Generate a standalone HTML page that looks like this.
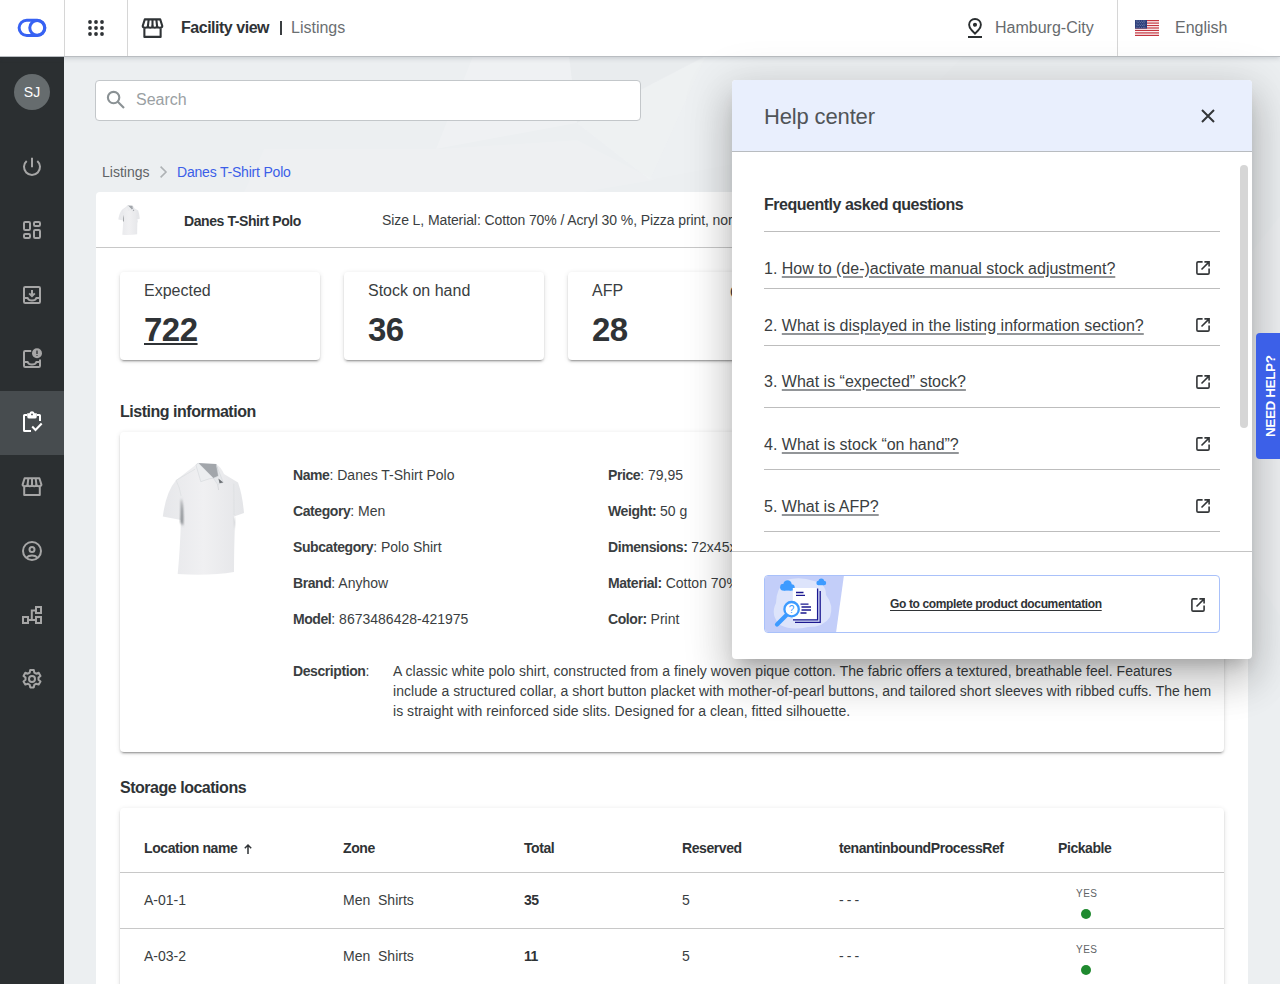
<!DOCTYPE html>
<html><head><meta charset="utf-8">
<style>
*{box-sizing:border-box;margin:0;padding:0}
html,body{width:1280px;height:984px;overflow:hidden}
body{font-family:"Liberation Sans",sans-serif;color:#333638;background:#eceff1;position:relative}
#hdr{position:absolute;left:0;top:0;width:1280px;height:56px;background:#fff;box-shadow:0 1px 0 #b9bdc1,0 2px 5px rgba(60,70,80,.22);z-index:5}
#side{position:absolute;left:0;top:56px;width:64px;height:928px;background:#2b2f31;z-index:4}
#bg{position:absolute;left:64px;top:56px;width:1216px;height:928px;background:#eceff1;overflow:hidden}
.vdiv{position:absolute;top:0;width:1px;height:56px;background:#d6d6d6}
.t{position:absolute;white-space:nowrap;line-height:1}
.b{font-weight:700;letter-spacing:-0.03em}
svg{position:absolute;overflow:visible}
.card{position:absolute;background:#fff;border-radius:4px;box-shadow:0 3px 1px -2px rgba(0,0,0,.2),0 2px 2px 0 rgba(0,0,0,.14),0 1px 5px 0 rgba(0,0,0,.12)}
</style></head><body>
<svg width="0" height="0" style="position:absolute">
  <defs>
    <linearGradient id="shg" x1="0" y1="0" x2="1" y2="0"><stop offset="0" stop-color="#e6e7ea"/><stop offset=".5" stop-color="#f0f0f2"/><stop offset="1" stop-color="#e4e5e8"/></linearGradient>
    <filter id="bl1" x="-50%" y="-50%" width="200%" height="200%"><feGaussianBlur stdDeviation="1.2"/></filter>
    <symbol id="shirt" viewBox="0 0 110 140">
      <path d="M47.5 13.5 L66.5 14.5 Q71 17 74 24 L88 32.5 Q92.5 45 94 63 L84 66.5 L85 72 Q84 100 84 122 Q60 126 27.7 124 Q30 100 31 70 L12.8 66.5 Q16 42 26 30.3 Z" fill="url(#shg)"/>
      <path d="M48.3 13.1 L66.3 14.1 Q68.5 20 68.4 26.1 L63.4 28.2 Z" fill="#a2a6ab"/>
      <path d="M45.9 14.8 L48.3 13.1 L63.4 28.2 L59.2 28.8 L50.8 31.7 Z" fill="#eceef0" stroke="#cfd2d6" stroke-width=".5"/>
      <path d="M66.3 14.8 L73.3 32.4 L67.7 34.5 L63.4 28.2 L68.4 26.1 Z" fill="#e6e8eb" stroke="#cfd2d6" stroke-width=".5"/>
      <path d="M68.4 28.6 L73.3 32.4 L69.5 33.2 Z" fill="#6e7276"/>
      <path d="M67.7 34.5 L68.6 40" stroke="#c9ccd0" stroke-width=".6"/>
      <path d="M26.2 30.3 L45.2 19.1 M26.2 30.3 Q30 38 31.1 46 M83.8 33.8 Q84 50 84 65" stroke="#d9dbde" stroke-width=".6" fill="none"/>
      <path d="M31 48 Q34 58 33 76 L30.5 72 Q31 60 31 48 Z" fill="#7e8286" filter="url(#bl1)"/>
      <path d="M84 66 Q86 70 85 80 L84.5 72 Z" fill="#b9bcc0" filter="url(#bl1)"/>
    </symbol>
  </defs>
</svg>
<div id="bg">
  <svg style="left:0;top:0" width="1216" height="928" viewBox="0 0 1216 928">
    <g fill="#fff">
      <path d="M409 0 L505 0 L513 67 L372 93 Z" opacity=".16"/>
      <path d="M513 67 L642 0 L586 124 Z" opacity=".12"/>
      <path d="M200 93 L372 93 L513 84 L591 124 L520 136 L180 136 Z" opacity=".10"/>
      <path d="M642 0 L900 0 L820 80 L586 124 Z" opacity=".08"/>
      <path d="M1184 200 L1216 160 L1216 560 L1190 520 Z" opacity=".10"/>
    </g>
    <g fill="#000">
      <path d="M505 0 L642 0 L513 67 Z" opacity=".012"/>
    </g>
  </svg>
</div>

<!-- MAIN -->
<div id="main" style="position:absolute;left:0;top:0;width:1280px;height:984px">
  <!-- search -->
  <div style="position:absolute;left:95px;top:79.5px;width:546px;height:41.5px;background:#fff;border:1px solid #c3c7ca;border-radius:4px"></div>
  <svg style="left:104px;top:88px" width="24" height="24" viewBox="0 0 24 24" fill="none" stroke="#8a9194" stroke-width="2.1"><circle cx="9.6" cy="9.6" r="5.7"/><path d="M13.8 13.8l6.2 6.2"/></svg>
  <div class="t" style="left:136px;top:92px;font-size:16px;color:#9aa0a3">Search</div>
  <!-- breadcrumb -->
  <div class="t" style="left:102px;top:165px;font-size:14px;color:#5f6366">Listings</div>
  <svg style="left:155px;top:164px" width="16" height="16" viewBox="0 0 16 16" fill="none" stroke="#aeb2b5" stroke-width="1.6"><path d="M5.6 2.6 11 8l-5.4 5.4"/></svg>
  <div class="t" style="left:177px;top:165px;font-size:14px;color:#3b5ee8;letter-spacing:-0.2px">Danes T-Shirt Polo</div>

  <!-- white panel -->
  <div style="position:absolute;left:96px;top:192px;width:1152px;height:800px;background:#fff;border-radius:4px 4px 0 0"></div>
  <div style="position:absolute;left:96px;top:247px;width:1152px;height:1px;background:#c8c8c8"></div>
  <!-- thumb -->
  <svg style="left:115px;top:202px" width="29" height="37" viewBox="0 0 110 140"><use href="#shirt"/></svg>
  <div class="t b" style="left:184px;top:214px;font-size:14px;color:#2f3336">Danes T-Shirt Polo</div>
  <div class="t" style="left:382px;top:213px;font-size:14px;color:#3a3e41;letter-spacing:-0.1px">Size L, Material: Cotton 70% / Acryl 30 %, Pizza print, normal fit</div>

  <!-- metric cards -->
  <div class="card" style="left:120px;top:272px;width:200px;height:88px;box-shadow:0 3px 1px -2px rgba(0,0,0,.2),0 2px 2px 0 rgba(0,0,0,.14),0 1px 5px 0 rgba(0,0,0,.12)"></div>
  <div class="card" style="left:344px;top:272px;width:200px;height:88px;box-shadow:0 3px 1px -2px rgba(0,0,0,.2),0 2px 2px 0 rgba(0,0,0,.14),0 1px 5px 0 rgba(0,0,0,.12)"></div>
  <div class="card" style="left:568px;top:272px;width:200px;height:88px;box-shadow:0 3px 1px -2px rgba(0,0,0,.2),0 2px 2px 0 rgba(0,0,0,.14),0 1px 5px 0 rgba(0,0,0,.12)"></div>
  <div class="t" style="left:144px;top:283px;font-size:16px;color:#3a3e41">Expected</div>
  <div class="t b" style="left:144px;top:313px;font-size:33px;color:#2f3336;letter-spacing:-0.5px;text-decoration:underline;text-underline-offset:2px;text-decoration-thickness:2px">722</div>
  <div class="t" style="left:368px;top:283px;font-size:16px;color:#3a3e41">Stock on hand</div>
  <div class="t b" style="left:368px;top:313px;font-size:33px;color:#2f3336;letter-spacing:-0.5px">36</div>
  <div class="t" style="left:592px;top:283px;font-size:16px;color:#3a3e41">AFP</div>
  <div class="t b" style="left:592px;top:313px;font-size:33px;color:#2f3336;letter-spacing:-0.5px">28</div>
  <div class="t" style="left:730px;top:285px;font-size:16px;color:#3a3e41">On hold</div>

  <!-- listing information -->
  <div class="t b" style="left:120px;top:404px;font-size:16px;color:#2f3336">Listing information</div>
  <div class="card" style="left:120px;top:432px;width:1104px;height:320px"></div>
  <svg style="left:150px;top:450px" width="110" height="140" viewBox="0 0 110 140"><use href="#shirt"/></svg>
  <div class="t" style="left:293px;top:468px;font-size:14px;color:#3a3e41"><b class="b">Name</b>: Danes T-Shirt Polo</div>
  <div class="t" style="left:293px;top:504px;font-size:14px;color:#3a3e41"><b class="b">Category</b>: Men</div>
  <div class="t" style="left:293px;top:540px;font-size:14px;color:#3a3e41"><b class="b">Subcategory</b>: Polo Shirt</div>
  <div class="t" style="left:293px;top:576px;font-size:14px;color:#3a3e41"><b class="b">Brand</b>: Anyhow</div>
  <div class="t" style="left:293px;top:612px;font-size:14px;color:#3a3e41"><b class="b">Model</b>: 8673486428-421975</div>
  <div class="t" style="left:608px;top:468px;font-size:14px;color:#3a3e41"><b class="b">Price</b>: 79,95</div>
  <div class="t" style="left:608px;top:504px;font-size:14px;color:#3a3e41"><b class="b">Weight:</b> 50 g</div>
  <div class="t" style="left:608px;top:540px;font-size:14px;color:#3a3e41"><b class="b">Dimensions:</b> 72x45x3 cm</div>
  <div class="t" style="left:608px;top:576px;font-size:14px;color:#3a3e41"><b class="b">Material:</b> Cotton 70% / Acryl 30 %</div>
  <div class="t" style="left:608px;top:612px;font-size:14px;color:#3a3e41"><b class="b">Color:</b> Print</div>
  <div class="t" style="left:293px;top:664px;font-size:14px;color:#3a3e41"><b class="b">Description</b>:</div>
  <div class="t" style="left:393px;top:665px;font-size:14px;color:#3a3e41;line-height:20px;top:661px;letter-spacing:0.035px">A classic white polo shirt, constructed from a finely woven pique cotton. The fabric offers a textured, breathable feel. Features<br>include a structured collar, a short button placket with mother-of-pearl buttons, and tailored short sleeves with ribbed cuffs. The hem<br>is straight with reinforced side slits. Designed for a clean, fitted silhouette.</div>

  <!-- storage locations -->
  <div class="t b" style="left:120px;top:780px;font-size:16px;color:#2f3336">Storage locations</div>
  <div class="card" style="left:120px;top:808px;width:1104px;height:200px"></div>
  <div style="position:absolute;left:120px;top:872px;width:1104px;height:1px;background:#c8c8c8"></div>
  <div style="position:absolute;left:120px;top:928px;width:1104px;height:1px;background:#c8c8c8"></div>
  <div class="t b" style="left:144px;top:841px;font-size:14px;color:#2f3336">Location name</div>
  <svg style="left:243px;top:843px" width="10" height="12" viewBox="0 0 10 12" fill="none" stroke="#2f3336" stroke-width="1.5"><path d="M5 11V2M1.8 5.2 5 2l3.2 3.2"/></svg>
  <div class="t b" style="left:343px;top:841px;font-size:14px;color:#2f3336">Zone</div>
  <div class="t b" style="left:524px;top:841px;font-size:14px;color:#2f3336">Total</div>
  <div class="t b" style="left:682px;top:841px;font-size:14px;color:#2f3336">Reserved</div>
  <div class="t b" style="left:839px;top:841px;font-size:14px;color:#2f3336">tenantinboundProcessRef</div>
  <div class="t b" style="left:1058px;top:841px;font-size:14px;color:#2f3336">Pickable</div>

  <div class="t" style="left:144px;top:893px;font-size:14px;color:#3a3e41">A-01-1</div>
  <div class="t" style="left:343px;top:893px;font-size:14px;color:#3a3e41;white-space:pre">Men  Shirts</div>
  <div class="t b" style="left:524px;top:893px;font-size:14px;color:#2f3336">35</div>
  <div class="t" style="left:682px;top:893px;font-size:14px;color:#3a3e41">5</div>
  <div class="t" style="left:839px;top:893px;font-size:14px;color:#3a3e41;letter-spacing:-0.4px">- - -</div>
  <div class="t" style="left:1076px;top:889px;font-size:10px;color:#5f6366;letter-spacing:.5px">YES</div>
  <div style="position:absolute;left:1081px;top:909px;width:10px;height:10px;border-radius:50%;background:#1f8a2f"></div>

  <div class="t" style="left:144px;top:949px;font-size:14px;color:#3a3e41">A-03-2</div>
  <div class="t" style="left:343px;top:949px;font-size:14px;color:#3a3e41;white-space:pre">Men  Shirts</div>
  <div class="t b" style="left:524px;top:949px;font-size:14px;color:#2f3336">11</div>
  <div class="t" style="left:682px;top:949px;font-size:14px;color:#3a3e41">5</div>
  <div class="t" style="left:839px;top:949px;font-size:14px;color:#3a3e41;letter-spacing:-0.4px">- - -</div>
  <div class="t" style="left:1076px;top:945px;font-size:10px;color:#5f6366;letter-spacing:.5px">YES</div>
  <div style="position:absolute;left:1081px;top:965px;width:10px;height:10px;border-radius:50%;background:#1f8a2f"></div>
</div>

<!-- HELP PANEL -->
<div id="help" style="position:absolute;left:732px;top:80px;width:520px;height:579px;background:#fff;border-radius:4px;box-shadow:0 11px 15px -7px rgba(0,0,0,.2),0 24px 38px 3px rgba(0,0,0,.14),0 9px 46px 8px rgba(0,0,0,.12);z-index:10;overflow:hidden">
</div>
<div id="helpc" style="position:absolute;left:0;top:0;width:1280px;height:984px;z-index:11">
  <div style="position:absolute;left:732px;top:80px;width:520px;height:71px;background:#e9effd;border-radius:4px 4px 0 0"></div>
  <div style="position:absolute;left:732px;top:151px;width:520px;height:1px;background:#b8bcc0"></div>
  <div class="t" style="left:764px;top:106px;font-size:22px;color:#505457;letter-spacing:-0.15px">Help center</div>
  <svg style="left:1201px;top:109px" width="14" height="14" viewBox="0 0 14 14" stroke="#333638" stroke-width="2"><path d="M1 1l12 12M13 1 1 13"/></svg>
  <div style="position:absolute;left:1240px;top:165px;width:8px;height:263px;border-radius:4px;background:#d6d6d6"></div>
  <div class="t b" style="left:764px;top:197px;font-size:16px;color:#2f3336">Frequently asked questions</div>
  <div style="position:absolute;left:764px;top:231px;width:456px;height:1px;background:#bdbdbd"></div>
  <div class="t" style="left:764px;top:260.5px;font-size:16px;color:#3a3e41">1. <span style="text-decoration:underline;text-decoration-color:#929598;text-underline-offset:2px;text-decoration-thickness:1.5px">How to (de-)activate manual stock adjustment?</span></div>
  <svg style="left:1193px;top:258px" width="20" height="20" viewBox="0 0 20 20" fill="none" stroke="#333638" stroke-width="1.6"><path d="M9.6 3.9H5.1Q3.9 3.9 3.9 5.1V14.9Q3.9 16.1 5.1 16.1H14.9Q16.1 16.1 16.1 14.9V10.6"/><path d="M11.4 3.9h4.7v4.6M15.9 4.1 8.5 11.5"/></svg>
  <div style="position:absolute;left:764px;top:288px;width:456px;height:1px;background:#bdbdbd"></div>
  <div class="t" style="left:764px;top:317.5px;font-size:16px;color:#3a3e41">2. <span style="text-decoration:underline;text-decoration-color:#929598;text-underline-offset:2px;text-decoration-thickness:1.5px">What is displayed in the listing information section?</span></div>
  <svg style="left:1193px;top:315px" width="20" height="20" viewBox="0 0 20 20" fill="none" stroke="#333638" stroke-width="1.6"><path d="M9.6 3.9H5.1Q3.9 3.9 3.9 5.1V14.9Q3.9 16.1 5.1 16.1H14.9Q16.1 16.1 16.1 14.9V10.6"/><path d="M11.4 3.9h4.7v4.6M15.9 4.1 8.5 11.5"/></svg>
  <div style="position:absolute;left:764px;top:345px;width:456px;height:1px;background:#bdbdbd"></div>
  <div class="t" style="left:764px;top:373.5px;font-size:16px;color:#3a3e41">3. <span style="text-decoration:underline;text-decoration-color:#929598;text-underline-offset:2px;text-decoration-thickness:1.5px">What is “expected” stock?</span></div>
  <svg style="left:1193px;top:372px" width="20" height="20" viewBox="0 0 20 20" fill="none" stroke="#333638" stroke-width="1.6"><path d="M9.6 3.9H5.1Q3.9 3.9 3.9 5.1V14.9Q3.9 16.1 5.1 16.1H14.9Q16.1 16.1 16.1 14.9V10.6"/><path d="M11.4 3.9h4.7v4.6M15.9 4.1 8.5 11.5"/></svg>
  <div style="position:absolute;left:764px;top:407px;width:456px;height:1px;background:#bdbdbd"></div>
  <div class="t" style="left:764px;top:436.5px;font-size:16px;color:#3a3e41">4. <span style="text-decoration:underline;text-decoration-color:#929598;text-underline-offset:2px;text-decoration-thickness:1.5px">What is stock “on hand”?</span></div>
  <svg style="left:1193px;top:434px" width="20" height="20" viewBox="0 0 20 20" fill="none" stroke="#333638" stroke-width="1.6"><path d="M9.6 3.9H5.1Q3.9 3.9 3.9 5.1V14.9Q3.9 16.1 5.1 16.1H14.9Q16.1 16.1 16.1 14.9V10.6"/><path d="M11.4 3.9h4.7v4.6M15.9 4.1 8.5 11.5"/></svg>
  <div style="position:absolute;left:764px;top:469px;width:456px;height:1px;background:#bdbdbd"></div>
  <div class="t" style="left:764px;top:498.5px;font-size:16px;color:#3a3e41">5. <span style="text-decoration:underline;text-decoration-color:#929598;text-underline-offset:2px;text-decoration-thickness:1.5px">What is AFP?</span></div>
  <svg style="left:1193px;top:496px" width="20" height="20" viewBox="0 0 20 20" fill="none" stroke="#333638" stroke-width="1.6"><path d="M9.6 3.9H5.1Q3.9 3.9 3.9 5.1V14.9Q3.9 16.1 5.1 16.1H14.9Q16.1 16.1 16.1 14.9V10.6"/><path d="M11.4 3.9h4.7v4.6M15.9 4.1 8.5 11.5"/></svg>
  <div style="position:absolute;left:764px;top:531px;width:456px;height:1px;background:#bdbdbd"></div>

  <div style="position:absolute;left:732px;top:551px;width:520px;height:1px;background:#c4c4c4"></div>
  <div style="position:absolute;left:764px;top:575px;width:456px;height:58px;border:1px solid #a9c1fa;border-radius:4px;overflow:hidden">
    <svg style="left:-1px;top:-1px" width="82" height="58" viewBox="0 0 82 58">
      <path d="M0 0H80L72 58H0z" fill="#c3cef9"/>
      <path d="M22 5Q36 1 50 6Q62 8 62 20Q70 30 66 42Q60 52 44 52Q28 56 16 50Q6 40 12 28Q12 14 22 5Z" fill="#dde4fb"/>
      <g fill="#3d9bff"><circle cx="23.5" cy="9.5" r="4.2"/><circle cx="19.5" cy="12.2" r="3.4"/><circle cx="27.5" cy="12.4" r="3.2"/><rect x="19.5" y="11" width="8" height="4.6"/>
      <circle cx="57.3" cy="6.2" r="2.8"/><circle cx="54.6" cy="8" r="2.2"/><circle cx="60" cy="8" r="2.2"/><rect x="54.6" y="7" width="5.4" height="3.2"/></g>
      <g stroke="#1b1890" stroke-width="1.3" fill="none"><path d="M56.2 16V47.3H31"/><path d="M53.6 13.5V44.8H29"/></g>
      <rect x="28.8" y="13" width="23.8" height="31" fill="#fff"/>
      <g stroke="#1b1890" stroke-width="1.3"><path d="M32 17.5h7.5M32 20.3h9M36.5 29.2h8M37.5 32h9.5M37.5 35h9.5M36.5 38h6"/></g>
      <path d="M22.5 40 13 49.6" stroke="#3d9bff" stroke-width="4.2" stroke-linecap="round"/>
      <circle cx="27.6" cy="34.2" r="7.2" fill="#fff" stroke="#3d9bff" stroke-width="2.3"/>
      <text x="27.6" y="37.8" font-family="Liberation Sans" font-size="10" fill="#3d9bff" text-anchor="middle">?</text>
    </svg>
  </div>
  <div class="t b" style="left:890px;top:598px;font-size:12px;color:#2f3336;text-decoration:underline;text-underline-offset:2px">Go to complete product documentation</div>
  <svg style="left:1188px;top:595px" width="20" height="20" viewBox="0 0 20 20" fill="none" stroke="#333638" stroke-width="1.6"><path d="M9.6 3.9H5.1Q3.9 3.9 3.9 5.1V14.9Q3.9 16.1 5.1 16.1H14.9Q16.1 16.1 16.1 14.9V10.6"/><path d="M11.4 3.9h4.7v4.6M15.9 4.1 8.5 11.5"/></svg>
  <!-- need help tab -->
  <div style="position:absolute;left:1256px;top:333px;width:30px;height:126px;border-radius:4px;background:#3c60e8"></div>
  <div class="t b" style="left:1263.5px;top:437px;font-size:13.5px;color:#fff;transform:rotate(-90deg);transform-origin:0 0;letter-spacing:-0.4px">NEED HELP?</div>
</div>

<!-- HEADER -->
<div id="hdr">
  <div class="vdiv" style="left:64px"></div>
  <div class="vdiv" style="left:127px"></div>
  <div class="vdiv" style="left:1117px"></div>
  <!-- logo -->
  <svg style="left:16px;top:17px" width="32" height="22" viewBox="0 0 32 22"><rect x="3.1" y="3.2" width="25.8" height="15.3" rx="7.65" fill="none" stroke="#3762f3" stroke-width="3"/><circle cx="21.2" cy="10.85" r="7.45" fill="none" stroke="#3762f3" stroke-width="3"/></svg>
  <!-- grid -->
  <svg style="left:88px;top:20px" width="16" height="16" viewBox="0 0 16 16" fill="#2f3336"><circle cx="2" cy="2" r="1.9"/><circle cx="8" cy="2" r="1.9"/><circle cx="14" cy="2" r="1.9"/><circle cx="2" cy="8" r="1.9"/><circle cx="8" cy="8" r="1.9"/><circle cx="14" cy="8" r="1.9"/><circle cx="2" cy="14" r="1.9"/><circle cx="8" cy="14" r="1.9"/><circle cx="14" cy="14" r="1.9"/></svg>
  <!-- store -->
  <svg style="left:140.3px;top:14.6px" width="25" height="25" viewBox="0 0 24 24" fill="none" stroke="#2f3336" stroke-width="2" stroke-linejoin="round"><path d="M4.6 4.2H19.4L21.4 10.6Q21.4 12.2 19 12.2Q16.4 12.2 16.4 10.6Q16.4 12.2 14.2 12.2Q12 12.2 12 10.6Q12 12.2 9.8 12.2Q7.6 12.2 7.6 10.6Q7.6 12.2 5 12.2Q2.6 12.2 2.6 10.6Z"/><path d="M8.3 4.4 7.6 10.6M12 4.4V10.6M15.7 4.4l.7 6.2"/><path d="M4.2 12.6V21H19.8V12.6"/></svg>
  <div class="t b" style="left:181px;top:20px;font-size:16px;color:#2f3336">Facility view</div>
  <div style="position:absolute;left:279.5px;top:21px;width:2px;height:13.5px;background:#3a3e41"></div>
  <div class="t" style="left:291px;top:20px;font-size:16px;color:#6b6f72">Listings</div>
  <!-- location -->
  <svg style="left:968px;top:18px" width="14" height="20" viewBox="0 0 14 20" fill="none" stroke="#2a2e30" stroke-width="1.9"><path d="M7 1C3.7 1 1.1 3.5 1.1 6.8c0 2.3 1.3 3.9 2.4 5.2L7 15.6l3.5-3.6c1.1-1.3 2.4-2.9 2.4-5.2C12.9 3.5 10.3 1 7 1z"/><circle cx="7" cy="6.8" r="1.1" fill="#2a2e30"/><path d="M0 19h14" stroke-width="2"/></svg>
  <div class="t" style="left:995px;top:20px;font-size:16px;color:#676b6e">Hamburg-City</div>
  <!-- flag -->
  <svg style="left:1135px;top:20px" width="24" height="16" viewBox="0 0 24 16"><rect width="24" height="16" fill="#fff"/><g fill="#c4343f"><rect y="0" width="24" height="1.23"/><rect y="2.46" width="24" height="1.23"/><rect y="4.92" width="24" height="1.23"/><rect y="7.38" width="24" height="1.23"/><rect y="9.84" width="24" height="1.23"/><rect y="12.3" width="24" height="1.23"/><rect y="14.77" width="24" height="1.23"/></g><rect width="12" height="8.6" fill="#2c3e7a"/><circle cx="1.2" cy="1.0" r=".38" fill="#c9d0e6"/><circle cx="2.95" cy="1.0" r=".38" fill="#c9d0e6"/><circle cx="4.7" cy="1.0" r=".38" fill="#c9d0e6"/><circle cx="6.45" cy="1.0" r=".38" fill="#c9d0e6"/><circle cx="8.2" cy="1.0" r=".38" fill="#c9d0e6"/><circle cx="9.95" cy="1.0" r=".38" fill="#c9d0e6"/><circle cx="2.07" cy="2.55" r=".38" fill="#c9d0e6"/><circle cx="3.8200000000000003" cy="2.55" r=".38" fill="#c9d0e6"/><circle cx="5.57" cy="2.55" r=".38" fill="#c9d0e6"/><circle cx="7.32" cy="2.55" r=".38" fill="#c9d0e6"/><circle cx="9.069999999999999" cy="2.55" r=".38" fill="#c9d0e6"/><circle cx="1.2" cy="4.1" r=".38" fill="#c9d0e6"/><circle cx="2.95" cy="4.1" r=".38" fill="#c9d0e6"/><circle cx="4.7" cy="4.1" r=".38" fill="#c9d0e6"/><circle cx="6.45" cy="4.1" r=".38" fill="#c9d0e6"/><circle cx="8.2" cy="4.1" r=".38" fill="#c9d0e6"/><circle cx="9.95" cy="4.1" r=".38" fill="#c9d0e6"/><circle cx="2.07" cy="5.65" r=".38" fill="#c9d0e6"/><circle cx="3.8200000000000003" cy="5.65" r=".38" fill="#c9d0e6"/><circle cx="5.57" cy="5.65" r=".38" fill="#c9d0e6"/><circle cx="7.32" cy="5.65" r=".38" fill="#c9d0e6"/><circle cx="9.069999999999999" cy="5.65" r=".38" fill="#c9d0e6"/><circle cx="1.2" cy="7.2" r=".38" fill="#c9d0e6"/><circle cx="2.95" cy="7.2" r=".38" fill="#c9d0e6"/><circle cx="4.7" cy="7.2" r=".38" fill="#c9d0e6"/><circle cx="6.45" cy="7.2" r=".38" fill="#c9d0e6"/><circle cx="8.2" cy="7.2" r=".38" fill="#c9d0e6"/><circle cx="9.95" cy="7.2" r=".38" fill="#c9d0e6"/></svg>
  <div class="t" style="left:1175px;top:20px;font-size:16px;color:#676b6e">English</div>
</div>

<!-- SIDEBAR -->
<div id="side">
  <div style="position:absolute;left:14px;top:18px;width:36px;height:36px;border-radius:50%;background:#666c6e"></div>
  <div class="t" style="left:14px;top:29px;width:36px;text-align:center;font-size:14px;color:#fff;letter-spacing:0">SJ</div>
  <div style="position:absolute;left:0;top:335px;width:64px;height:64px;background:#474c4f"></div>
  <!-- power 166 -->
  <svg style="left:20px;top:98px" width="24" height="24" viewBox="0 0 24 24" fill="none" stroke="#a6a6a6" stroke-width="2"><path d="M12 3.8v9.4"/><path d="M6.7 6.9A8 8 0 1 0 17.3 6.9"/></svg>
  <!-- dashboard 230 -->
  <svg style="left:20px;top:162px" width="24" height="24" viewBox="0 0 24 24" fill="none" stroke="#a6a6a6" stroke-width="2"><rect x="4" y="4" width="6" height="8" rx="1.2"/><rect x="14" y="4" width="6" height="4" rx="1.2"/><rect x="14" y="12" width="6" height="8" rx="1.2"/><rect x="4" y="16" width="6" height="4" rx="1.2"/></svg>
  <!-- inbox in 294 -->
  <svg style="left:20px;top:227px" width="24" height="24" viewBox="0 0 24 24" fill="none" stroke="#a6a6a6" stroke-width="2"><rect x="4" y="4" width="16" height="16" rx="1.2"/><path d="M4 15h3.6c.6 1.6 2.4 2.6 4.4 2.6s3.8-1 4.4-2.6H20"/><path d="M12 7v6M9.2 10.4 12 13.2l2.8-2.8"/></svg>
  <!-- inbox alert 358 -->
  <svg style="left:20px;top:291px" width="24" height="24" viewBox="0 0 24 24" fill="none" stroke="#a6a6a6" stroke-width="2"><path d="M11.2 4H5.2C4.5 4 4 4.5 4 5.2v13.6C4 19.5 4.5 20 5.2 20h13.6c.7 0 1.2-.5 1.2-1.2V12.6"/><path d="M4 15h3.6c.6 1.6 2.4 2.6 4.4 2.6s3.8-1 4.4-2.6H20"/><circle cx="17" cy="6.2" r="5" fill="#a6a6a6" stroke="none"/><path d="M17 3.6v3.4M17 8.2v.9" stroke="#2b2f31" stroke-width="1.3"/></svg>
  <!-- clipboard check 422 active -->
  <svg style="left:20px;top:354px" width="24" height="24" viewBox="0 0 24 24" fill="none" stroke="#fff" stroke-width="2"><path d="M11 21H4.6Q4 21 4 20.4V5.6Q4 5 4.6 5H7"/><path d="M17 5h2.4q.6 0 .6.6V11"/><path d="M7.2 3.2H9.4A2.7 2.7 0 0 1 14.6 3.2H16.8V6.4Q16.8 8.6 14.8 8.6H9.2Q7.2 8.6 7.2 6.4Z" fill="#fff" stroke="none"/><circle cx="12" cy="4.4" r=".9" fill="#474c4f" stroke="none"/><path d="M12.2 16.6l3.3 3.3 6.2-6.3" stroke-width="2.1"/></svg>
  <!-- store 486 -->
  <svg style="left:20px;top:418px" width="24" height="24" viewBox="0 0 24 24" fill="none" stroke="#a6a6a6" stroke-width="2" stroke-linejoin="round"><path d="M4.6 4.2H19.4L21.4 10.6Q21.4 12.2 19 12.2Q16.4 12.2 16.4 10.6Q16.4 12.2 14.2 12.2Q12 12.2 12 10.6Q12 12.2 9.8 12.2Q7.6 12.2 7.6 10.6Q7.6 12.2 5 12.2Q2.6 12.2 2.6 10.6Z"/><path d="M8.3 4.4 7.6 10.6M12 4.4V10.6M15.7 4.4l.7 6.2"/><path d="M4.2 12.6V21H19.8V12.6"/></svg>
  <!-- account 550 -->
  <svg style="left:20px;top:483px" width="24" height="24" viewBox="0 0 24 24" fill="none" stroke="#a6a6a6" stroke-width="2"><circle cx="12" cy="12" r="9"/><circle cx="12" cy="10.5" r="2.5"/><path d="M6.4 18.8c1.4-1.4 3.4-2.2 5.6-2.2s4.2.8 5.6 2.2"/></svg>
  <!-- hierarchy 614 -->
  <svg style="left:20px;top:546px" width="24" height="24" viewBox="0 0 24 24" fill="none" stroke="#a6a6a6" stroke-width="2"><rect x="3" y="15" width="5" height="6"/><rect x="16" y="5" width="5" height="6"/><rect x="16" y="15" width="5" height="6"/><path d="M8 18h8M11.8 18V8.4H16"/></svg>
  <!-- settings 678 -->
  <svg style="left:20px;top:611px" width="24" height="24" viewBox="0 0 24 24" fill="none" stroke="#a6a6a6" stroke-width="2" stroke-linejoin="round"><path d="M10.2 3h3.6l.5 2.6 1.9 1.1 2.5-.9 1.8 3.1-2 1.7v2.2l2 1.7-1.8 3.1-2.5-.9-1.9 1.1-.5 2.6h-3.6l-.5-2.6-1.9-1.1-2.5.9-1.8-3.1 2-1.7v-2.2l-2-1.7 1.8-3.1 2.5.9 1.9-1.1z"/><circle cx="12" cy="12" r="3"/></svg>
</div>
</body></html>
